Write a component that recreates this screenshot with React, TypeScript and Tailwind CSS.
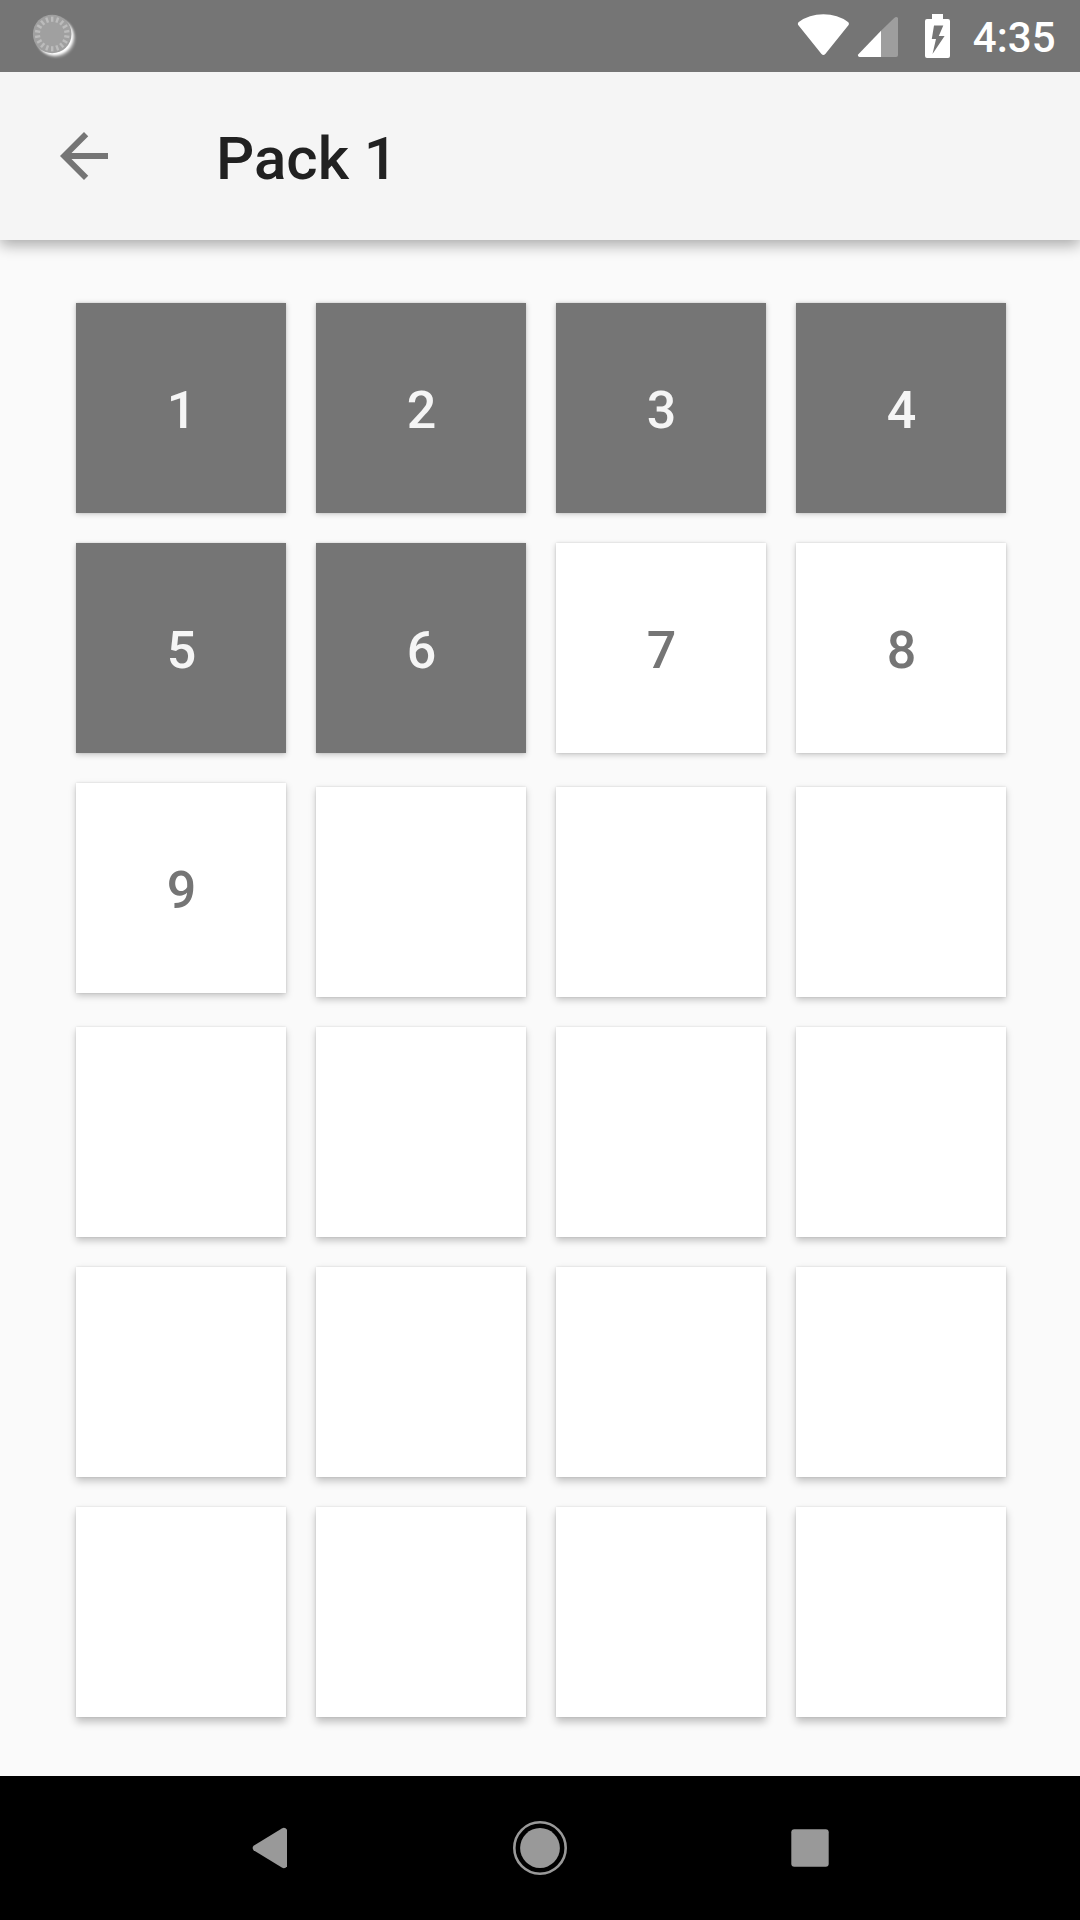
const SOLVED = 6;
const NUMBERED = 9;
const tiles = Array.from({ length: 24 }, (_, i) => i + 1);

const ROW_SHADOWS = [
  'shadow-[0_0_2px_rgba(0,0,0,0.12),0_1px_6px_rgba(0,0,0,0.2)]',
  'shadow-[0_0_2px_rgba(0,0,0,0.12),0_2px_6px_rgba(0,0,0,0.2)]',
  'shadow-[0_0_2px_rgba(0,0,0,0.12),0_3px_7px_rgba(0,0,0,0.21)]',
  'shadow-[0_0_2px_rgba(0,0,0,0.12),0_4px_7px_rgba(0,0,0,0.21)]',
  'shadow-[0_0_2px_rgba(0,0,0,0.12),0_4px_8px_rgba(0,0,0,0.23)]',
  'shadow-[0_0_2px_rgba(0,0,0,0.12),0_5px_8px_rgba(0,0,0,0.24)]',
];

function SpinnerIcon() {
  const ticks = Array.from({ length: 18 }, (_, i) => i * 20);
  return (
    <svg className="ml-8 h-[46px] w-[46px]" viewBox="0 0 46 46">
      <defs>
        <filter id="soft" x="-20%" y="-20%" width="140%" height="140%">
          <feGaussianBlur stdDeviation="0.8" />
        </filter>
      </defs>
      <circle cx="24" cy="25" r="19.4" fill="#fff" opacity=".3" filter="url(#soft)" />
      <circle cx="22.6" cy="23.6" r="18.9" fill="#fff" filter="url(#soft)" />
      <circle cx="20.2" cy="21" r="19.3" fill="#a0a0a0" />
      {ticks.map((a) => (
        <line key={a} x1="20.2" y1="3.6" x2="20.2" y2="8.8" stroke="#bcbcbc" strokeWidth="2.4" transform={`rotate(${a} 20.2 21)`} />
      ))}
    </svg>
  );
}

function StatusBar() {
  return (
    <div className="relative z-20 flex h-[72px] items-center justify-between bg-[#757575]">
      <SpinnerIcon />
      <div className="flex h-[72px] items-center text-white">
        <svg width="160" height="72" viewBox="796 0 160 72" fill="currentColor">
          <path d="M798.6 25.5C797.6 24.6 797.6 22.8 798.8 22Q809 14.2 823.4 14.2T848 22C849.2 22.8 849.2 24.6 848.2 25.5L825.3 54Q823.4 56 821.5 54Z" />
          <path d="M881 30.8V57H859.5Q857 56.3 858.4 54.2Z" />
          <path d="M881 30.8 894.2 18Q896.5 15.8 898 18V55Q898 57 896 57H881Z" opacity=".3" />
          <path
            fillRule="evenodd"
            d="M932 14H943V19H948Q950 19 950 21V56Q950 58 948 58H927Q925 58 925 56V21Q925 19 927 19H932ZM934 25.5 931.8 39H936L932.5 54 944.6 36H938.8L943.3 25.5Z"
          />
        </svg>
        <span className="mt-[3px] mr-[24.5px] ml-[17px] text-[42px] leading-none font-medium">4:35</span>
      </div>
    </div>
  );
}

function AppBar() {
  return (
    <header className="relative z-10 flex h-[168px] items-center bg-[#f5f5f5] pl-12 shadow-[0_5px_14px_rgba(0,0,0,0.33)]">
      <svg className="h-[72px] w-[72px]" viewBox="0 0 24 24" fill="#757575">
        <path d="M20 11H7.83l5.59-5.59L12 4l-8 8 8 8 1.41-1.41L7.83 13H20v-2z" />
      </svg>
      <h1 className="mt-[5px] ml-24 text-[60px] leading-none font-medium text-[#212121]">Pack 1</h1>
    </header>
  );
}

function Tile({ n }: { n: number }) {
  const solved = n <= SOLVED;
  const offset = n > NUMBERED ? 'mt-1 -mb-1' : '';
  const color = solved ? 'bg-[#757575] text-[#f5f5f5]' : 'bg-white text-[#757575]';
  return (
    <button
      className={`flex h-[210px] w-[210px] items-center justify-center text-[52px] leading-none font-medium ${offset} ${color} ${ROW_SHADOWS[Math.floor((n - 1) / 4)]}`}
    >
      {n <= NUMBERED && <span className="mt-[5px] ml-px">{n}</span>}
    </button>
  );
}

function NavBar() {
  return (
    <nav className="flex h-36 items-center justify-center gap-[216px] bg-black text-[#999999]">
      <svg width="54" height="54" viewBox="0 0 54 54" fill="currentColor">
        <path d="M10.6 29.2Q8.6 27 10.6 24.8L38.8 7.4Q42 5.6 44 8.8V45.2Q42 48.4 38.8 46.6Z" />
      </svg>
      <svg width="54" height="54" viewBox="0 0 54 54" fill="currentColor">
        <circle cx="27" cy="27" r="25.7" fill="none" stroke="currentColor" strokeWidth="2.6" />
        <circle cx="27" cy="27" r="19.9" />
      </svg>
      <svg width="54" height="54" viewBox="0 0 54 54" fill="currentColor">
        <rect x="8.3" y="8.3" width="37.4" height="37.4" rx="3" />
      </svg>
    </nav>
  );
}

export default function App() {
  return (
    <div className="flex h-[1920px] w-[1080px] flex-col overflow-hidden bg-[#fafafa] font-['Roboto',sans-serif]">
      <StatusBar />
      <AppBar />
      <main className="grid flex-1 grid-cols-[repeat(4,210px)] content-start gap-[30px] pt-[63px] pl-[76px]">
        {tiles.map((n) => (
          <Tile key={n} n={n} />
        ))}
      </main>
      <NavBar />
    </div>
  );
}
